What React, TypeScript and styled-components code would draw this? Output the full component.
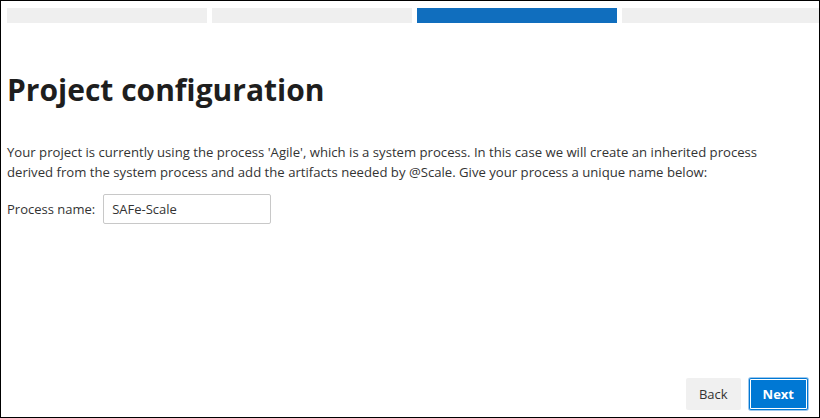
import React, { useState } from "react";
import styled, { createGlobalStyle } from "styled-components";

const GlobalStyle = createGlobalStyle`
    html, body {
        margin: 0;
        padding: 0;
        background: #ffffff;
    }
    * {
        box-sizing: border-box;
    }
`;

const StyledPage = styled.div`
    display: flex;
    flex-direction: column;
    width: 820px;
    height: 418px;
    border: 1px solid #000000;
    overflow: hidden;
    font-family: "Open Sans", "Noto Sans", sans-serif;
    color: #333333;
`;

const StyledSteps = styled.div`
    display: flex;
    gap: 5px;
    padding: 7px 0 0 6px;
`;

interface StepProps {
    active: boolean;
}

const StyledStep = styled.div<StepProps>`
    flex: 0 0 200px;
    height: 15px;
    background-color: ${props => props.active ? '#106ebe' : '#efefef'};
`;

const StyledContent = styled.main`
    flex: 1;
    padding: 0 6px;
`;

const StyledTitle = styled.h1`
    margin: 47px 0 0;
    font-size: 30px;
    line-height: 40px;
    font-weight: 700;
    color: #1e1e1e;
`;

const StyledText = styled.p`
    margin: 32px 0 0;
    font-size: 13.15px;
    line-height: 20px;
    white-space: nowrap;
`;

const StyledField = styled.div`
    display: flex;
    align-items: center;
    gap: 8px;
    margin-top: 12px;
    font-size: 13px;
`;

const StyledInput = styled.input`
    width: 168px;
    height: 30px;
    padding: 0 8px;
    border: 1px solid #c8c8c8;
    border-radius: 2px;
    font-family: inherit;
    font-size: 13px;
    color: #333333;
    outline: none;
`;

const StyledFooter = styled.footer`
    display: flex;
    justify-content: flex-end;
    align-items: center;
    gap: 8px;
    padding: 0 11px 7px 0;
`;

interface ButtonProps {
    primary?: boolean;
}

const StyledButton = styled.button<ButtonProps>`
    height: 32px;
    padding: 0 ${props => props.primary ? 14 : 13}px;
    border: none;
    border-radius: 2px;
    font-family: inherit;
    font-size: 13px;
    font-weight: ${props => props.primary ? 700 : 400};
    color: ${props => props.primary ? '#ffffff' : '#333333'};
    background-color: ${props => props.primary ? '#0078d4' : '#f0f0f0'};
    box-shadow: ${props => props.primary ? 'inset 0 0 0 1px #0078d4, inset 0 0 0 2px #ffffff, 0 0 0 1px #9cc8ee' : 'none'};
    cursor: pointer;
`;

const steps = [false, false, true, false];

const App = () => {
    const [name, setName] = useState("SAFe-Scale");

    return (
        <>
            <GlobalStyle />
            <StyledPage>
                <StyledSteps>
                    {steps.map((active, i) => (
                        <StyledStep key={i} active={active} />
                    ))}
                </StyledSteps>
                <StyledContent>
                    <StyledTitle>Project configuration</StyledTitle>
                    <StyledText>
                        Your project is currently using the process 'Agile', which is a system process. In this case we will create an inherited process
                        <br />
                        derived from the system process and add the artifacts needed by @Scale. Give your process a unique name below:
                    </StyledText>
                    <StyledField>
                        <label htmlFor="process-name">Process name:</label>
                        <StyledInput id="process-name" value={name} onChange={e => setName(e.target.value)} />
                    </StyledField>
                </StyledContent>
                <StyledFooter>
                    <StyledButton>Back</StyledButton>
                    <StyledButton primary>Next</StyledButton>
                </StyledFooter>
            </StyledPage>
        </>
    );
};

export default App;
